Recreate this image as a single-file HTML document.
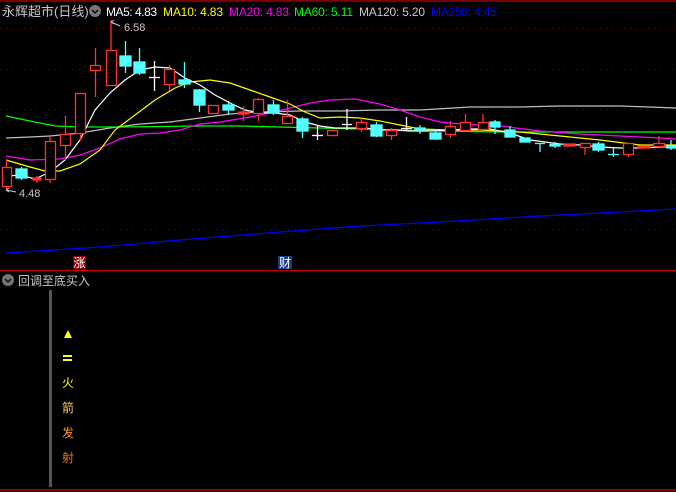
<!DOCTYPE html>
<html><head><meta charset="utf-8"><style>
html,body{margin:0;padding:0;background:#000;width:676px;height:492px;overflow:hidden}
svg{display:block}
text{font-family:"Liberation Sans","Noto Sans CJK SC",sans-serif}
</style></head><body>
<svg width="676" height="492" viewBox="0 0 676 492" xmlns="http://www.w3.org/2000/svg">
<rect width="676" height="492" fill="#000"/>
<line x1="0" y1="1" x2="676" y2="1" stroke="#a00000" stroke-width="1.5"/>
<g stroke="#7a0000" stroke-dasharray="1,5" stroke-width="1">
<line x1="0" y1="28.5" x2="676" y2="28.5"/><line x1="0" y1="69.5" x2="676" y2="69.5"/>
<line x1="0" y1="109.5" x2="676" y2="109.5"/><line x1="0" y1="149.5" x2="676" y2="149.5"/>
<line x1="0" y1="189.5" x2="676" y2="189.5"/><line x1="0" y1="229.5" x2="676" y2="229.5"/>
</g>
<g fill="none" stroke-width="1.2">
<polyline stroke="#0000ff" points="6,253 100,247 180,240 280,232 360,226 440,222 540,216 600,213 676,209"/>
<polyline stroke="#c0c0c0" points="6,138 30,137 50,136 80,133 110,128 140,124 170,122 200,118 230,114 260,112 300,111 340,111 380,110 420,110 470,107 520,107 560,106 620,106 676,108"/>
<polyline stroke="#00ff00" points="6,116 30,121 55,126 80,127 120,127 200,126 240,126 280,127 320,128 360,129 400,130 440,131 500,132 560,132 676,132"/>
<polyline stroke="#ff00ff" points="6,156 30,160 60,159 80,155 100,148 120,139 140,134 160,133 180,130 200,124 220,122 250,117 270,113 290,108 310,103 330,100 355,99 380,104 400,110 420,117 440,122 460,124 500,126 540,131 580,134 620,136 660,138 676,139"/>
<polyline stroke="#ffff00" points="6,160 30,167 45,171 60,171 80,164 100,150 115,130 135,115 155,100 175,88 190,82 210,80 230,83 250,90 270,97 290,104 305,112 320,118 340,117 360,118 380,121 400,125 420,129 450,130 480,130 520,132 560,136 600,140 640,145 676,145"/>
<polyline stroke="#ffffff" points="8,176 20,175 35,179 50,172 65,160 80,140 95,110 110,93 125,80 140,70 155,67 170,68 185,78 200,85 215,95 230,103 245,110 260,113 275,113 290,115 305,122 320,126 335,128 350,128 365,128 380,130 395,130 410,131 430,131 450,130 470,129 490,129 510,133 530,140 545,142 560,144 580,145 600,147 620,148 640,148 660,147 676,147"/>
</g>
<g stroke="#ff3232" fill="none" stroke-width="1.3">
<line x1="6.5" y1="160" x2="6.5" y2="190"/><rect x="2.5" y="167.5" width="9" height="19" fill="#000"/>
<line x1="37" y1="176" x2="37" y2="183"/><rect x="33" y="178" width="8" height="2" fill="#ff3232"/>
<line x1="50" y1="136" x2="50" y2="183"/><rect x="45.5" y="141.5" width="10" height="38" fill="#000"/>
<line x1="65.5" y1="116" x2="65.5" y2="160"/><rect x="60.5" y="134.5" width="10" height="11" fill="#000"/>
<line x1="80.5" y1="130" x2="80.5" y2="141"/><rect x="75.5" y="93.5" width="10" height="40" fill="#000"/>
<line x1="95.5" y1="48" x2="95.5" y2="97"/><rect x="90.5" y="65.5" width="10" height="5" fill="#000"/>
<line x1="111" y1="20" x2="111" y2="85"/><rect x="106.5" y="50.5" width="10" height="35" fill="#000"/>
<line x1="169.5" y1="65" x2="169.5" y2="91"/><rect x="164.5" y="69.5" width="10" height="15" fill="#000"/>
<rect x="208.5" y="105.5" width="10" height="8"/>
<line x1="243.5" y1="106" x2="243.5" y2="121"/><rect x="238.5" y="112" width="10" height="2" fill="#ff3232"/>
<line x1="258.5" y1="98" x2="258.5" y2="121"/><rect x="253.5" y="99.5" width="10" height="14" fill="#000"/>
<line x1="287.5" y1="100" x2="287.5" y2="123"/><rect x="282.5" y="116.5" width="10" height="7" fill="#000"/>
<rect x="327.5" y="130.5" width="10" height="5"/>
<line x1="361.5" y1="118" x2="361.5" y2="132"/><rect x="356.5" y="122.5" width="10" height="6" fill="#000"/>
<line x1="391.5" y1="128" x2="391.5" y2="140"/><rect x="386.5" y="130.5" width="10" height="5" fill="#000"/>
<line x1="450.5" y1="121" x2="450.5" y2="138"/><rect x="445.5" y="126.5" width="10" height="8" fill="#000"/>
<line x1="465.5" y1="114" x2="465.5" y2="130"/><rect x="460.5" y="122.5" width="10" height="8" fill="#000"/>
<line x1="483" y1="114" x2="483" y2="130"/><rect x="478.5" y="122.5" width="10" height="7" fill="#000"/>
<rect x="564" y="144" width="11" height="2" fill="#ff3232"/>
<line x1="585" y1="143" x2="585" y2="155"/><rect x="580.5" y="143.5" width="10" height="4" fill="#000"/>
<line x1="628.5" y1="143" x2="628.5" y2="157"/><rect x="623.5" y="143.5" width="10" height="11" fill="#000"/>
<rect x="638" y="146" width="12" height="2" fill="#ff3232"/>
<line x1="659" y1="136" x2="659" y2="146"/><rect x="653.5" y="143.5" width="11" height="3" fill="#000"/>
</g>
<g fill="#54ffff" stroke="#54ffff" stroke-width="1.3">
<line x1="21.5" y1="167" x2="21.5" y2="180"/><rect x="16" y="169" width="11" height="9"/>
<line x1="125.5" y1="41" x2="125.5" y2="73"/><rect x="120" y="56" width="11" height="10"/>
<line x1="139.5" y1="48" x2="139.5" y2="75"/><rect x="134" y="62" width="11" height="11"/>
<line x1="184.5" y1="62" x2="184.5" y2="88"/><rect x="179" y="80" width="11" height="4"/>
<line x1="199.5" y1="89" x2="199.5" y2="112"/><rect x="194" y="90" width="11" height="15"/>
<line x1="228.5" y1="101" x2="228.5" y2="115"/><rect x="223" y="105" width="11" height="5"/>
<line x1="273.5" y1="100" x2="273.5" y2="115"/><rect x="268" y="105" width="11" height="8"/>
<line x1="302.5" y1="117" x2="302.5" y2="138"/><rect x="297" y="119" width="11" height="12"/>
<line x1="376.5" y1="122" x2="376.5" y2="137"/><rect x="371" y="125" width="11" height="11"/>
<line x1="420" y1="125" x2="420" y2="134"/><rect x="415" y="128" width="10" height="2"/>
<line x1="435.5" y1="129" x2="435.5" y2="140"/><rect x="430" y="133" width="11" height="6"/>
<line x1="495" y1="120" x2="495" y2="134"/><rect x="490" y="122" width="10" height="5"/>
<line x1="510" y1="126" x2="510" y2="137"/><rect x="505" y="130" width="10" height="7"/>
<rect x="520" y="138" width="10" height="4"/>
<line x1="540" y1="143" x2="540" y2="152"/><line x1="535" y1="143.5" x2="545" y2="143.5"/>
<line x1="555" y1="142" x2="555" y2="148"/><rect x="550" y="144.5" width="10" height="1.5"/>
<line x1="598.5" y1="142" x2="598.5" y2="152"/><rect x="593" y="144" width="11" height="6"/>
<line x1="613.5" y1="148" x2="613.5" y2="157"/><line x1="608" y1="154.5" x2="619" y2="154.5"/>
<line x1="671" y1="140" x2="671" y2="150"/><rect x="667" y="146" width="9" height="2"/>
</g>
<g stroke="#fff" stroke-width="1.3">
<line x1="154.5" y1="61" x2="154.5" y2="91"/><line x1="149" y1="77.5" x2="160" y2="77.5"/>
<line x1="317.5" y1="126" x2="317.5" y2="140"/><line x1="312" y1="135.5" x2="323" y2="135.5"/>
<line x1="347" y1="109" x2="347" y2="130"/><line x1="342" y1="124.5" x2="352" y2="124.5"/>
<line x1="406.5" y1="117" x2="406.5" y2="130"/><line x1="401" y1="128.5" x2="412" y2="128.5"/>
</g>
<g font-size="11" fill="#c8c8c8">
<text x="124" y="31">6.58</text><text x="19" y="197">4.48</text>
</g>
<g stroke="#c8c8c8" fill="none" stroke-width="1"><path d="M111 22 L120 26 M111 22 l3 -2 M111 22 l3 2"/><path d="M6 190 L16 192 M6 190 l3 -2 M6 190 l3 2"/></g>
<text x="2" y="16" font-size="13" fill="#c8c8c8">永辉超市(日线)</text>
<circle cx="95" cy="11" r="6" fill="#777"/><path d="M92 10 l3 3 l3 -3" stroke="#000" stroke-width="1.3" fill="none"/>
<g font-size="12">
<text x="106" y="16" fill="#fff" textLength="51">MA5: 4.83</text>
<text x="163" y="16" fill="#ffff00" textLength="60">MA10: 4.83</text>
<text x="229" y="16" fill="#ff00ff" textLength="60">MA20: 4.83</text>
<text x="294" y="16" fill="#00ff00" textLength="59">MA60: 5.11</text>
<text x="359" y="16" fill="#c8c8c8" textLength="66">MA120: 5.20</text>
<text x="431" y="16" fill="#0000ff" textLength="66">MA250: 4.45</text>
</g>
<rect x="73" y="256" width="13" height="13" fill="#900000"/><text x="73.5" y="267" font-size="12" fill="#fff">涨</text>
<rect x="278" y="256" width="14" height="13" fill="#1a3a8a"/><text x="279" y="267" font-size="12" fill="#fff">财</text>
<line x1="0" y1="270.5" x2="676" y2="270.5" stroke="#c00000" stroke-width="1.5"/>
<circle cx="8" cy="280" r="6" fill="#777"/><path d="M5 279 l3 3 l3 -3" stroke="#000" stroke-width="1.3" fill="none"/>
<text x="18" y="285" font-size="12" fill="#c8c8c8">回调至底买入</text>
<rect x="49" y="290" width="3" height="197" fill="#555"/>
<polygon points="68,330 72,338 64,338" fill="#ffff00"/>
<rect x="63" y="355" width="9" height="2" fill="#ffff00"/><rect x="63" y="359" width="9" height="2" fill="#ffff00"/>
<g font-size="12">
<text x="62" y="387" fill="#ffff00">火</text>
<text x="62" y="412" fill="#ffd040">箭</text>
<text x="62" y="437" fill="#ff9020">发</text>
<text x="62" y="462" fill="#ff7010">射</text>
</g>
<line x1="0" y1="490" x2="676" y2="490" stroke="#c00000" stroke-width="1.5"/>
</svg>
</body></html>
